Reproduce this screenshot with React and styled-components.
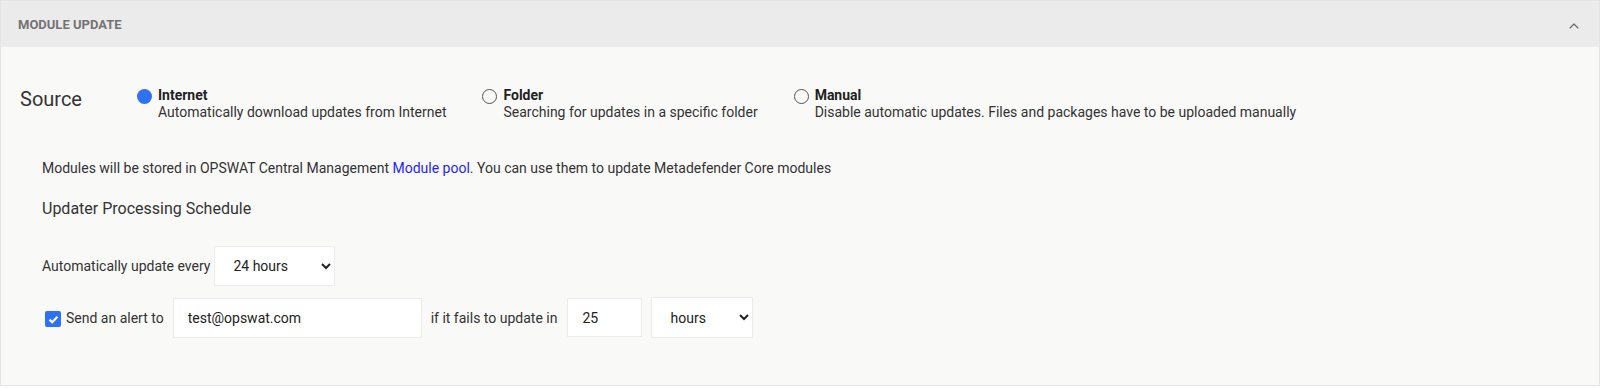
import React, { useState } from "react";
import styled, { createGlobalStyle } from "styled-components";
import { ChevronUp } from "lucide-react";

const GlobalStyle = createGlobalStyle`
  html, body {
    margin: 0;
    padding: 0;
    background: #ffffff;
  }
  body {
    font-family: Roboto, "Liberation Sans", Arial, sans-serif;
    color: #333333;
  }
  * {
    box-sizing: border-box;
  }
`;

const Card = styled.div`
  width: 1600px;
  border: 1px solid #e4e4e4;
  background: #f9f9f8;
`;

const Header = styled.div`
  height: 46px;
  background: #ebebeb;
  display: flex;
  align-items: center;
  justify-content: space-between;
  padding: 0 17px 0 17px;
  color: #737373;
`;

const Title = styled.div`
  font-size: 13px;
  font-weight: 700;
  text-transform: uppercase;
`;

const Toggle = styled.div`
  display: flex;
  align-items: center;
  margin-top: 4px;
  color: #666666;
`;

const Body = styled.div`
  padding: 40px 20px 47px 19px;
`;

const SourceRow = styled.div`
  display: flex;
  align-items: flex-start;
`;

const SourceLabel = styled.div`
  width: 117px;
  font-size: 20px;
  line-height: 24px;
  margin-top: 0;
  color: #333;
`;

const Options = styled.div`
  display: flex;
  gap: 36px;
`;

const Option = styled.label`
  display: flex;
  align-items: flex-start;
  gap: 6px;
  cursor: pointer;
`;

const RadioDot = styled.span`
  width: 15px;
  height: 15px;
  margin-top: 2px;
  border-radius: 50%;
  flex-shrink: 0;
  background: ${(p) => (p.$checked ? "#2e72f2" : "transparent")};
  border: ${(p) => (p.$checked ? "none" : "1.5px solid #555555")};
`;

const OptionText = styled.div`
  display: flex;
  flex-direction: column;
  font-size: 14px;
  line-height: 17px;
`;

const OptionName = styled.span`
  font-weight: 700;
  color: #222;
`;

const OptionDesc = styled.span`
  color: #333;
`;

const Section = styled.div`
  padding-left: 22px;
  margin-top: 39px;
`;

const Note = styled.div`
  font-size: 14px;
  line-height: 17px;
`;

const Link = styled.a`
  color: #1f1ff8;
  text-decoration: none;
`;

const SubTitle = styled.div`
  font-size: 16px;
  line-height: 19px;
  margin-top: 22px;
  color: #333;
`;

const FieldRow = styled.div`
  display: flex;
  align-items: center;
  gap: ${(p) => p.$gap || 9}px;
  margin-top: ${(p) => p.$top}px;
  font-size: 14px;
`;

const Select = styled.select`
  height: ${(p) => p.$h || 40}px;
  width: ${(p) => p.$w}px;
  padding: 0 6px 0 14px;
  background: #ffffff;
  border: 1px solid #ececec;
  border-radius: 0;
  font-family: Roboto, "Liberation Sans", Arial, sans-serif;
  font-size: 14px;
  color: #222;
  outline: none;
`;

const TextInput = styled.input`
  height: ${(p) => p.$h || 40}px;
  width: ${(p) => p.$w}px;
  margin-left: ${(p) => p.$ml || 0}px;
  padding: 0 14px;
  background: #ffffff;
  border: 1px solid #ececec;
  border-radius: 0;
  font-family: Roboto, "Liberation Sans", Arial, sans-serif;
  font-size: 14px;
  color: #222;
  outline: none;
  caret-color: #000;
`;

const CheckLabel = styled.label`
  display: flex;
  align-items: center;
  gap: 5px;
  margin-left: 3px;
  cursor: pointer;
`;

const CheckBox = styled.span`
  width: 16px;
  height: 16px;
  margin-top: 3px;
  border-radius: 2px;
  background: #2f71f5;
  display: flex;
  align-items: center;
  justify-content: center;
`;

const sources = [
  { id: "internet", name: "Internet", desc: "Automatically download updates from Internet" },
  { id: "folder", name: "Folder", desc: "Searching for updates in a specific folder" },
  { id: "manual", name: "Manual", desc: "Disable automatic updates. Files and packages have to be uploaded manually" },
];

export default function App() {
  const [source, setSource] = useState("internet");
  const [every, setEvery] = useState("24");
  const [email, setEmail] = useState("test@opswat.com");
  const [fails, setFails] = useState("25");
  const [unit, setUnit] = useState("hours");

  return (
    <>
      <GlobalStyle />
      <Card>
        <Header>
          <Title>Module Update</Title>
          <Toggle>
            <ChevronUp size={16} strokeWidth={1.7} />
          </Toggle>
        </Header>
        <Body>
          <SourceRow>
            <SourceLabel>Source</SourceLabel>
            <Options>
              {sources.map((s) => (
                <Option key={s.id} onClick={() => setSource(s.id)}>
                  <RadioDot $checked={source === s.id} />
                  <OptionText>
                    <OptionName>{s.name}</OptionName>
                    <OptionDesc>{s.desc}</OptionDesc>
                  </OptionText>
                </Option>
              ))}
            </Options>
          </SourceRow>

          <Section>
            <Note>
              Modules will be stored in OPSWAT Central Management{" "}
              <Link href="#">Module pool</Link>. You can use them to update
              Metadefender Core modules
            </Note>
            <SubTitle>Updater Processing Schedule</SubTitle>

            <FieldRow $top={28} $gap={4}>
              <span>Automatically update every</span>
              <Select $w={121} value={every} onChange={(e) => setEvery(e.target.value)}>
                <option value="1">1 hour</option>
                <option value="12">12 hours</option>
                <option value="24">24 hours</option>
              </Select>
            </FieldRow>

            <FieldRow $top={11} $gap={9}>
              <CheckLabel>
                <CheckBox>
                  <svg width="11" height="9" viewBox="0 0 11 9">
                    <path d="M1.5 4.6 L4.2 7.2 L9.5 1.8" fill="none" stroke="#fff" strokeWidth="2.2" />
                  </svg>
                </CheckBox>
                <span>Send an alert to</span>
              </CheckLabel>
              <TextInput $w={249} value={email} onChange={(e) => setEmail(e.target.value)} />
              <span>if it fails to update in</span>
              <TextInput
                $w={75}
                $h={39}
                $ml={1}
                autoFocus
                value={fails}
                onChange={(e) => setFails(e.target.value)}
              />
              <Select $w={102} $h={41} value={unit} onChange={(e) => setUnit(e.target.value)}>
                <option value="minutes">minutes</option>
                <option value="hours">hours</option>
                <option value="days">days</option>
              </Select>
            </FieldRow>
          </Section>
        </Body>
      </Card>
    </>
  );
}
